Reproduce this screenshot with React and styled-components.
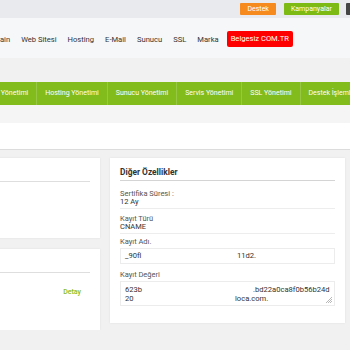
import React from 'react';
import styled, { createGlobalStyle } from 'styled-components';

const GlobalStyle = createGlobalStyle`
  html, body {
    margin: 0;
    padding: 0;
    overflow: hidden;
    background: #f1f1f2;
  }
  body {
    font-family: Roboto, "Liberation Sans", sans-serif;
    color: #333;
  }
`;

const topLinks = [
  { label: 'Destek', color: '#f68a1f' },
  { label: 'Kampanyalar', color: '#7dba13' },
  { label: 'Giriş', color: '#444' },
];

const navLinks = ['Domain', 'Web Sitesi', 'Hosting', 'E-Mail', 'Sunucu', 'SSL', 'Marka'];

const panelLinks = [
  'Domain Yönetimi',
  'Hosting Yönetimi',
  'Sunucu Yönetimi',
  'Servis Yönetimi',
  'SSL Yönetimi',
  'Destek İşlemleri',
];

const App = () => {
  return (
    <Page>
      <GlobalStyle />
      <TopBar>
        {topLinks.map((l) => (
          <TopButton key={l.label} $bg={l.color}>
            {l.label}
          </TopButton>
        ))}
      </TopBar>

      <Header>
        <NavList>
          {navLinks.map((n) => (
            <NavItem key={n}>{n}</NavItem>
          ))}
          <RedBadge>Belgesiz COM.TR</RedBadge>
        </NavList>
      </Header>

      <PanelMenu>
        {panelLinks.map((p) => (
          <PanelItem key={p}>{p}</PanelItem>
        ))}
      </PanelMenu>

      <Breadcrumb>
        <BreadcrumbInner />
      </Breadcrumb>

      <Content>
        <Column>
          <Card $height={80}>
            <CardHead />
          </Card>
          <Card $height={81}>
            <CardHead />
            <DetailRow>
              <span />
              <DetailLink>Detay</DetailLink>
            </DetailRow>
          </Card>
        </Column>

        <Card>
          <Title>Diğer Özellikler</Title>
          <InfoRow>
            <Label>Sertifika Süresi :</Label>
            <Value>12 Ay</Value>
          </InfoRow>
          <InfoRow>
            <Label>Kayıt Türü</Label>
            <Value>CNAME</Value>
          </InfoRow>
          <Field>
            <Label>Kayıt Adı.</Label>
            <FakeInput>
              <Line>
                <span>_90fl</span>
                <Piece $pad={2}>11d2.</Piece>
              </Line>
            </FakeInput>
          </Field>
          <Field>
            <Label>Kayıt Değeri</Label>
            <FakeTextarea>
              <Line>
                <span>623b</span>
                <Piece $pad={18}>.bd22a0ca8f0b56b24d</Piece>
              </Line>
              <Line>
                <span>20</span>
                <Piece $pad={0}>loca.com.</Piece>
              </Line>
              <Grip viewBox="0 0 6 6">
                <path d="M6 0 L0 6 M6 2 L2 6 M6 4 L4 6" stroke="#999" strokeWidth="0.7" />
              </Grip>
            </FakeTextarea>
          </Field>
        </Card>
        <div />
      </Content>
    </Page>
  );
};

const Page = styled.div`
  width: 400px;
`;

const TopBar = styled.div`
  height: 18px;
  background: #e8eaed;
  display: flex;
  justify-content: flex-end;
  align-items: center;
  gap: 8px;
  padding-right: 26px;

  & > :last-child {
    margin-left: -1px;
  }
`;

const TopButton = styled.div`
  background: ${(p) => p.$bg};
  color: #fff;
  font-size: 7px;
  height: 12px;
  line-height: 12px;
  padding: 0 7px;
  border-radius: 1px;
  white-space: nowrap;
`;

const Header = styled.div`
  height: 40px;
  background: #f6f7f9;
  display: flex;
  align-items: center;
`;

const NavList = styled.nav`
  display: flex;
  align-items: center;
  gap: 11px;
  margin-left: -16px;
  margin-top: 2px;
  font-size: 7.6px;
  color: #333;
`;

const NavItem = styled.span`
  white-space: nowrap;
`;

const RedBadge = styled.span`
  background: #f00;
  color: #fff;
  padding: 0 4px;
  height: 16px;
  line-height: 16px;
  border-radius: 2px;
  margin-left: -3px;
  white-space: nowrap;
`;

const PanelMenu = styled.div`
  margin-top: 24px;
  height: 23px;
  background: #82bb1c;
  display: flex;
  overflow: hidden;
`;

const PanelItem = styled.div`
  flex: none;
  padding: 0 8px;
  color: #fff;
  font-size: 7px;
  line-height: 23px;
  white-space: nowrap;
  border-left: 1px solid rgba(255, 255, 255, 0.18);

  &:first-child {
    margin-left: -33px;
    border-left: none;
  }
`;

const Breadcrumb = styled.div`
  background: #f5f5f6;
  padding-top: 18px;
`;

const BreadcrumbInner = styled.div`
  height: 26px;
  background: #fff;
  border-bottom: 1px solid #dcdcdc;
`;

const Content = styled.div`
  display: grid;
  grid-template-columns: 210px 235px 1fr;
  gap: 10px;
  margin-left: -110px;
  padding-top: 8px;
  align-items: start;
`;

const Column = styled.div`
  display: flex;
  flex-direction: column;
  gap: 11px;
`;

const Card = styled.div`
  background: #fff;
  box-shadow: 0 0 2px rgba(0, 0, 0, 0.08);
  padding: 0 10px 17px;
  box-sizing: border-box;
  ${(p) => p.$height && `height: ${p.$height}px;`}
`;

const CardHead = styled.div`
  height: 23px;
  border-bottom: 1px solid #dedede;
`;

const DetailRow = styled.div`
  display: flex;
  justify-content: space-between;
  padding: 15px 9px 0 0;
`;

const DetailLink = styled.span`
  color: #86bd22;
  font-size: 7px;
  font-weight: 500;
`;

const Title = styled.div`
  font-size: 8.4px;
  font-weight: 700;
  color: #333;
  line-height: 10px;
  padding: 9px 0 3px;
  margin-bottom: 3px;
  border-bottom: 1px solid #d4d4d4;
`;

const InfoRow = styled.div`
  padding: 5.5px 0 2.5px;
  border-bottom: 1px solid #ededed;
  display: flex;
  flex-direction: column;
`;

const Label = styled.div`
  font-size: 7.5px;
  color: #555;
  line-height: 8px;
`;

const Value = styled.div`
  font-size: 7.5px;
  color: #333;
  line-height: 8px;
`;

const Field = styled.div`
  padding-top: 4px;
  display: flex;
  flex-direction: column;
  gap: 1.5px;

  & + & {
    padding-top: 7.5px;
  }
`;

const FakeInput = styled.div`
  border: 1px solid #ececec;
  height: 16px;
  box-sizing: border-box;
  padding: 0 4px;
  display: flex;
  align-items: center;
  font-size: 7.6px;
  color: #333;
`;

const FakeTextarea = styled.div`
  position: relative;
  border: 1px solid #ececec;
  height: 25px;
  padding: 3px 4px;
  box-sizing: border-box;
  font-size: 7.6px;
  color: #333;
  line-height: 9px;
`;

const Line = styled.div`
  display: grid;
  grid-template-columns: 110px 1fr;
  white-space: nowrap;
`;

const Piece = styled.span`
  padding-left: ${(p) => p.$pad}px;
`;

const Grip = styled.svg`
  position: absolute;
  right: 2px;
  bottom: 2px;
  width: 6px;
  height: 6px;
`;

export default App;
